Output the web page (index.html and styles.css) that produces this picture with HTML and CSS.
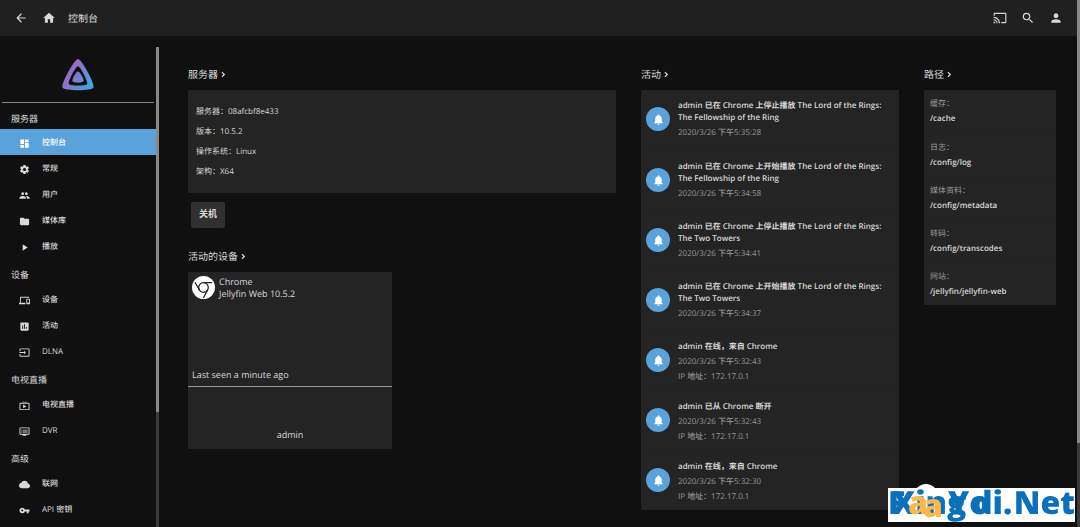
FILE: index.html
```html
<!DOCTYPE html>
<html lang="zh-CN">
<head>
<meta charset="utf-8">
<title>控制台</title>
<link rel="stylesheet" href="styles.css">
</head>
<body>
<svg class="defs" aria-hidden="true">
  <symbol id="bell" viewBox="0 0 24 24"><path d="M12 22c1.1 0 2-.9 2-2h-4c0 1.1.9 2 2 2zm6-6v-5c0-3.07-1.64-5.64-4.5-6.32V4c0-.83-.67-1.5-1.5-1.5s-1.5.67-1.5 1.5v.68C7.63 5.36 6 7.92 6 11v5l-2 2v1h16v-1l-2-2z"/></symbol>
  <symbol id="chevron" viewBox="0 0 24 24"><path d="M9 4.500 6.600 6.900 11.700 12l-5.100 5.100L9 19.500l7.500-7.500z"/></symbol>
</svg>
<header class="topbar">
  <button class="icon-btn" aria-label="返回"><svg viewBox="0 0 24 24"><path d="M20 11H7.830l5.590-5.590L12 4l-8 8 8 8 1.410-1.410L7.830 13H20v-2z"/></svg></button>
  <button class="icon-btn" aria-label="首页"><svg viewBox="0 0 24 24"><path d="M10 20v-6h4v6h5v-8h3L12 3 2 12h3v8z"/></svg></button>
  <h1 class="topbar-title">控制台</h1>
  <button class="icon-btn" aria-label="投射"><svg viewBox="0 0 24 24"><path d="M21 3H3c-1.100 0-2 .9-2 2v3h2V5h18v14h-7v2h7c1.100 0 2-.9 2-2V5c0-1.100-.9-2-2-2zM1 18v3h3c0-1.660-1.340-3-3-3zm0-4v2c2.760 0 5 2.240 5 5h2c0-3.870-3.130-7-7-7zm0-4v2c4.970 0 9 4.030 9 9h2c0-6.080-4.930-11-11-11z"/></svg></button>
  <button class="icon-btn" aria-label="搜索"><svg viewBox="0 0 24 24"><path d="M15.500 14h-.79l-.28-.27A6.471 6.471 0 0 0 16 9.500 6.500 6.500 0 1 0 9.500 16c1.610 0 3.090-.59 4.230-1.570l.27.28v.79l5 4.990L20.490 19l-4.990-5zm-6 0C7.010 14 5 11.990 5 9.500S7.010 5 9.500 5 14 7.010 14 9.500 11.990 14 9.500 14z"/></svg></button>
  <button class="icon-btn" aria-label="用户"><svg viewBox="0 0 24 24"><path d="M12 12c2.210 0 4-1.790 4-4s-1.790-4-4-4-4 1.790-4 4 1.790 4 4 4zm0 2c-2.670 0-8 1.340-8 4v2h16v-2c0-2.660-5.330-4-8-4z"/></svg></button>
</header>
<div class="layout">
  <nav class="sidebar">
    <div class="logo">
      <svg viewBox="0 0 32 32" role="img" aria-label="Jellyfin">
        <defs><linearGradient id="jf" x1="5" y1="12" x2="28" y2="26" gradientUnits="userSpaceOnUse"><stop offset="0" stop-color="#a065c3"/><stop offset="1" stop-color="#4a9fdc"/></linearGradient></defs>
        <path fill="url(#jf)" fill-rule="evenodd" d="M16 0C12.400 0-1.300 24.900.5 28.500s29.300 3.600 31 0S19.600 0 16 0zm9.200 25c-1.200 2-17.200 2-18.400 0S13.700 7.200 16 7.200 26.300 22.900 25.200 25z"/>
        <path fill="url(#jf)" d="M16 12.500c-1.900 0-6.500 8-5.600 9.800s10.300 1.800 11.200 0S17.900 12.500 16 12.500z"/>
      </svg>
    </div>
    <h2 class="nav-head first">服务器</h2>
    <a class="nav-item active" href="#"><svg viewBox="0 0 24 24"><path d="M3 13h8V3H3v10zm0 8h8v-6H3v6zm10 0h8V11h-8v10zm0-18v6h8V3h-8z"/></svg>控制台</a>
    <a class="nav-item" href="#"><svg viewBox="0 0 24 24"><path fill-rule="evenodd" d="M19.430 12.980a7.800 7.800 0 0 0 0-1.960l2.110-1.650a.5.5 0 0 0 .12-.64l-2-3.460a.5.5 0 0 0-.61-.22l-2.490 1a7.300 7.300 0 0 0-1.690-.98l-.38-2.650A.49.49 0 0 0 14 2h-4a.49.49 0 0 0-.49.420l-.38 2.650c-.61.250-1.170.59-1.690.98l-2.490-1a.5.5 0 0 0-.61.220l-2 3.460a.5.5 0 0 0 .12.640l2.110 1.650a7.900 7.900 0 0 0 0 1.960l-2.110 1.650a.5.5 0 0 0-.12.640l2 3.460c.12.220.39.300.61.220l2.490-1c.52.400 1.080.73 1.690.98l.38 2.650c.03.240.24.420.49.420h4c.25 0 .46-.18.490-.42l.38-2.650c.61-.25 1.170-.59 1.690-.98l2.490 1c.23.090.49 0 .61-.22l2-3.460a.5.5 0 0 0-.12-.64zM12 15.500a3.500 3.500 0 1 1 0-7 3.500 3.500 0 0 1 0 7z"/></svg>常规</a>
    <a class="nav-item" href="#"><svg viewBox="0 0 24 24"><path d="M16 11c1.660 0 2.990-1.340 2.990-3S17.660 5 16 5s-3 1.340-3 3 1.340 3 3 3zm-8 0c1.660 0 2.990-1.340 2.990-3S9.660 5 8 5 5 6.340 5 8s1.340 3 3 3zm0 2c-2.330 0-7 1.170-7 3.500V19h14v-2.500C15 14.170 10.330 13 8 13zm8 0c-.29 0-.62.020-.97.050C16.190 13.890 17 15.020 17 16.500V19h6v-2.500c0-2.330-4.670-3.500-7-3.500z"/></svg>用户</a>
    <a class="nav-item" href="#"><svg viewBox="0 0 24 24"><path d="M10 4H4c-1.100 0-2 .9-2 2v12c0 1.100.9 2 2 2h16c1.100 0 2-.9 2-2V8c0-1.100-.9-2-2-2h-8z"/></svg>媒体库</a>
    <a class="nav-item" href="#"><svg viewBox="0 0 24 24"><path d="M8 5v14l11-7z"/></svg>播放</a>
    <h2 class="nav-head">设备</h2>
    <a class="nav-item" href="#"><svg viewBox="0 0 24 24"><path fill-rule="evenodd" d="M4 6h18V4H4c-1.100 0-2 .9-2 2v11H0v3h14v-3H4V6zm19 2h-6c-.55 0-1 .45-1 1v10c0 .55.450 1 1 1h6c.55 0 1-.45 1-1V9c0-.55-.45-1-1-1zm-1 9h-4v-7h4v7z"/></svg>设备</a>
    <a class="nav-item" href="#"><svg viewBox="0 0 24 24"><path fill-rule="evenodd" d="M19 3H5c-1.100 0-2 .9-2 2v14c0 1.100.9 2 2 2h14c1.100 0 2-.9 2-2V5c0-1.100-.9-2-2-2zM9 17H7v-7h2v7zm4 0h-2V7h2v10zm4 0h-2v-4h2v4z"/></svg>活动</a>
    <a class="nav-item" href="#"><svg viewBox="0 0 24 24"><path d="M21 3H3c-1.100 0-2 .9-2 2v4h2V5h18v14H3v-4H1v4c0 1.100.9 2 2 2h18c1.100 0 2-.9 2-2V5c0-1.100-.9-2-2-2zM11 16l4-4-4-4v3H1v2h10v3z"/></svg>DLNA</a>
    <h2 class="nav-head">电视直播</h2>
    <a class="nav-item" href="#"><svg viewBox="0 0 24 24"><path fill-rule="evenodd" d="M21 6h-7.590l3.290-3.290L16 2l-4 4-4-4-.7.710L10.590 6H3a2 2 0 0 0-2 2v12c0 1.100.9 2 2 2h18c1.100 0 2-.9 2-2V8a2 2 0 0 0-2-2zm0 14H3V8h18v12zM9 10v8l7-4z"/></svg>电视直播</a>
    <a class="nav-item" href="#"><svg viewBox="0 0 24 24"><path fill-rule="evenodd" d="M21 3H3c-1.100 0-2 .9-2 2v12c0 1.100.9 2 2 2h5v2h8v-2h5c1.100 0 2-.9 2-2V5c0-1.100-.9-2-2-2zm0 14H3V5h18v12zM19 8H8v2h11V8zm0 4H8v2h11v-2zM7 8H5v2h2V8zm0 4H5v2h2v-2z"/></svg>DVR</a>
    <h2 class="nav-head">高级</h2>
    <a class="nav-item" href="#"><svg viewBox="0 0 24 24"><path d="M19.350 10.040A7.490 7.490 0 0 0 12 4C9.110 4 6.600 5.640 5.350 8.040A5.994 5.994 0 0 0 0 14c0 3.310 2.690 6 6 6h13c2.760 0 5-2.240 5-5 0-2.640-2.050-4.780-4.650-4.960z"/></svg>联网</a>
    <a class="nav-item" href="#"><svg viewBox="0 0 24 24"><path fill-rule="evenodd" d="M12.650 10A5.990 5.990 0 0 0 7 6c-3.310 0-6 2.690-6 6s2.690 6 6 6a5.990 5.990 0 0 0 5.650-4H17v4h4v-4h2v-4H12.650zM7 14c-1.100 0-2-.9-2-2s.9-2 2-2 2 .9 2 2-.9 2-2 2z"/></svg>API 密钥</a>
  </nav>
  <div class="scrollbar side-scroll"></div>
  <main class="content">
    <div class="column">
      <a class="section-title" href="#">服务器<svg><use href="#chevron"/></svg></a>
      <section class="card server-info">
        <p>服务器：08afcbf8e433</p>
        <p>版本：10.5.2</p>
        <p>操作系统：Linux</p>
        <p>架构：X64</p>
      </section>
      <button class="shutdown">关机</button>
      <a class="section-title" href="#">活动的设备<svg><use href="#chevron"/></svg></a>
      <section class="card device">
        <div class="device-top">
          <div class="device-app">
            <svg viewBox="0 0 24 24"><circle cx="12" cy="12" r="12" fill="#fff"/><g fill="none" stroke="#222" stroke-width="1.300"><circle cx="12" cy="12" r="5"/><path d="M12 7 21 7M7.700 14.500 3 6.500M16.300 14.500 11.800 23"/></g></svg>
            <div>Chrome<br>Jellyfin Web 10.5.2</div>
          </div>
          <div>Last seen a minute ago</div>
        </div>
        <div class="device-user">admin</div>
      </section>
    </div>
    <div class="column">
      <a class="section-title" href="#">活动<svg><use href="#chevron"/></svg></a>
      <section class="card">
        <article class="event"><span class="badge"><svg><use href="#bell"/></svg></span><div><h3>admin 已在 Chrome 上停止播放 The Lord of the Rings:<br>The Fellowship of the Ring</h3><p>2020/3/26 下午5:35:28</p></div></article>
        <article class="event"><span class="badge"><svg><use href="#bell"/></svg></span><div><h3>admin 已在 Chrome 上开始播放 The Lord of the Rings:<br>The Fellowship of the Ring</h3><p>2020/3/26 下午5:34:58</p></div></article>
        <article class="event"><span class="badge"><svg><use href="#bell"/></svg></span><div><h3>admin 已在 Chrome 上停止播放 The Lord of the Rings:<br>The Two Towers</h3><p>2020/3/26 下午5:34:41</p></div></article>
        <article class="event"><span class="badge"><svg><use href="#bell"/></svg></span><div><h3>admin 已在 Chrome 上开始播放 The Lord of the Rings:<br>The Two Towers</h3><p>2020/3/26 下午5:34:37</p></div></article>
        <article class="event"><span class="badge"><svg><use href="#bell"/></svg></span><div><h3>admin 在线，来自 Chrome</h3><p>2020/3/26 下午5:32:43</p><p>IP 地址：172.17.0.1</p></div></article>
        <article class="event"><span class="badge"><svg><use href="#bell"/></svg></span><div><h3>admin 已从 Chrome 断开</h3><p>2020/3/26 下午5:32:43</p><p>IP 地址：172.17.0.1</p></div></article>
        <article class="event"><span class="badge"><svg><use href="#bell"/></svg></span><div><h3>admin 在线，来自 Chrome</h3><p>2020/3/26 下午5:32:30</p><p>IP 地址：172.17.0.1</p></div></article>
      </section>
    </div>
    <div class="column">
      <a class="section-title" href="#">路径<svg><use href="#chevron"/></svg></a>
      <dl class="card paths">
        <div><dt>缓存：</dt><dd>/cache</dd></div>
        <div><dt>日志：</dt><dd>/config/log</dd></div>
        <div><dt>媒体资料：</dt><dd>/config/metadata</dd></div>
        <div><dt>转码：</dt><dd>/config/transcodes</dd></div>
        <div><dt>网站：</dt><dd>/jellyfin/jellyfin-web</dd></div>
      </dl>
    </div>
  </main>
</div>
<div class="scrollbar page-scroll"></div>
<div class="halo"></div>
<div class="watermark">
  <span class="wm-f">F</span>
  <span class="wm-xing">Xing</span>
  <span class="wm-a">a</span>
  <span class="wm-a low">a</span>
  <span class="wm-yo">Yo</span>
  <span class="wm-di">di.</span>
  <span class="wm-net">Net</span>
</div>
</body>
</html>
```
FILE: styles.css
```css
* { box-sizing: border-box; }
body {
  margin: 0;
  height: 100vh;
  overflow: hidden;
  display: flex;
  flex-direction: column;
  background: #101010;
  color: #d8d8d8;
  font: 9px/12px "Open Sans", "Noto Sans", "Noto Sans CJK SC", sans-serif;
  text-rendering: geometricPrecision;
}
h1, h2, h3, p, dl, dd { margin: 0; font-size: inherit; font-weight: 400; }
a { color: inherit; text-decoration: none; }
svg { fill: currentColor; flex: none; }
.defs { position: absolute; width: 0; height: 0; }
button { border: 0; padding: 0; color: inherit; font: inherit; }

.topbar {
  flex: none;
  display: flex;
  align-items: center;
  gap: 14px;
  height: 36px;
  padding: 0 17px 0 14px;
  background: #202020;
}
.icon-btn { background: none; width: 14px; height: 14px; }
.icon-btn svg { display: block; width: 14px; height: 14px; }
.topbar-title { flex: 1; margin-left: -2px; font-size: 10px; }

.layout { flex: 1; min-height: 0; display: flex; }
.sidebar { width: 156px; overflow: hidden; font-size: 8px; font-weight: 500; }
.logo {
  height: 67px;
  margin: 0 2px;
  padding-top: 23px;
  border-bottom: 1px solid #888;
  text-align: center;
}
.logo svg { width: 32px; height: 32px; }
.nav-head { height: 27px; padding: 10px 0 0 11px; font-size: 9px; }
.nav-head.first { height: 26px; }
.nav-item {
  display: flex;
  align-items: center;
  gap: 12px;
  height: 26px;
  padding: 2px 0 0 19px;
}
.nav-item svg { width: 11px; height: 11px; }
.nav-item.active { background: #5ba2da; color: #fff; }

.scrollbar { width: 3px; background: #3b3b3b; }
.scrollbar::before { content: ""; display: block; background: #888; }
.side-scroll { margin-top: 11px; }
.side-scroll::before { height: 76%; }
.page-scroll { position: fixed; top: 0; right: 0; bottom: 0; }
.page-scroll::before { height: 84%; }

.content {
  flex: 1;
  display: grid;
  grid-template-columns: 428fr 258fr 132fr;
  gap: 25px;
  align-items: start;
  padding: 30px 24px 0 29px;
}
.column { min-width: 0; }
.section-title {
  display: flex;
  align-items: center;
  gap: 1px;
  height: 16px;
  margin-bottom: 8px;
  font-size: 10px;
}
.section-title svg { width: 9px; height: 9px; }
.card { background: #242424; border-radius: 1px; }
.server-info { padding: 12px 8px 11px; font-size: 8px; font-weight: 500; line-height: 20px; }
.shutdown {
  display: block;
  margin: 9px 0 20px 3px;
  padding: 6px 8px 8px;
  border-radius: 2px;
  background: #303030;
  font-weight: 700;
}
.device { width: 204px; }
.device-top {
  display: flex;
  flex-direction: column;
  justify-content: space-between;
  height: 115px;
  padding: 4px 4px 5px;
  border-bottom: 1px solid #999;
}
.device-app { display: flex; gap: 4px; }
.device-app svg { width: 23px; height: 23px; }
.device-user { padding: 42px 0 8px; text-align: center; }

.event {
  display: flex;
  gap: 8px;
  height: 60px;
  padding: 10px 0 0 5px;
}
.event + .event { border-top: 1px solid #212121; }
.event h3 { font-size: 8px; font-weight: 600; white-space: nowrap; }
.event p { margin-top: 3px; color: #999; font-size: 8px; font-weight: 500; }
.badge {
  flex: none;
  display: grid;
  place-items: center;
  width: 24px;
  height: 24px;
  margin-top: 7px;
  border-radius: 50%;
  background: #5ba2da;
  color: #fff;
}
.badge svg { width: 13px; height: 13px; }
.paths div { height: 43px; padding: 6px; line-height: 15px; }
.paths dt { color: #999; font-size: 8px; }
.paths dd { font-size: 8px; font-weight: 600; }
.paths div + div { border-top: 1px solid #212121; }

.halo {
  position: fixed;
  right: 142px;
  bottom: 19px;
  width: 24px;
  height: 24px;
  border-radius: 50%;
  background: #fff;
}
.watermark {
  position: fixed;
  right: 5px;
  bottom: 5px;
  width: 187px;
  height: 34px;
  background: #fff;
  color: #0b70b8;
  font: 800 32px/30px "Open Sans", "Noto Sans", sans-serif;
  white-space: nowrap;
}
.watermark span { position: absolute; top: 0; }
.wm-f { left: 0; }
.wm-xing { left: 4px; }
.wm-a { left: 20px; color: #fdb94e; }
.watermark .low { left: 35px; top: 3px; }
.wm-yo { left: 60px; }
.wm-di { left: 84px; }
.wm-net { right: 0; }
```
